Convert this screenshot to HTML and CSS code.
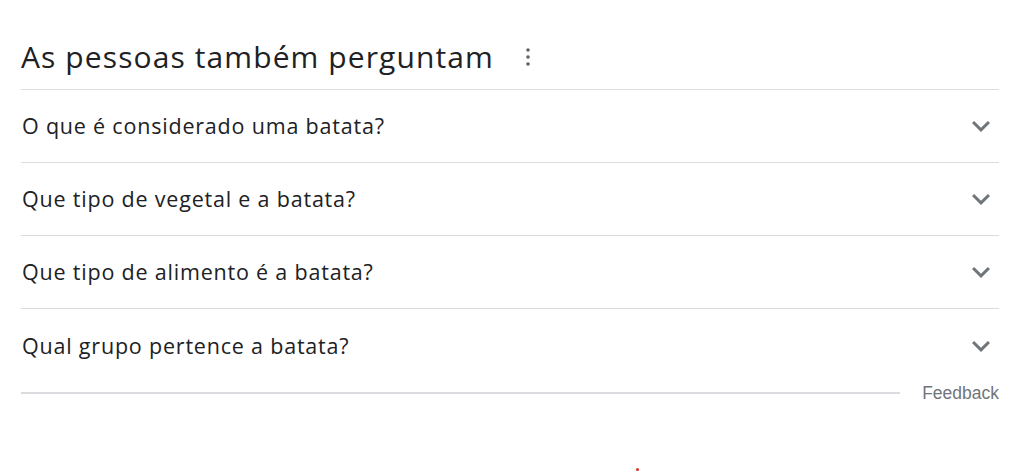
FILE: index.html
```html
<!DOCTYPE html>
<html lang="pt">
<head>
<meta charset="utf-8">
<link rel="stylesheet" href="styles.css">
</head>
<body>
<div class="paa">
  <div class="paa-head">
    <h2 class="paa-title">As pessoas também perguntam</h2>
    <span class="paa-more" aria-label="Mais opções">
      <svg width="6" height="20" viewBox="0 0 6 20"><circle cx="3" cy="3" r="1.8"/><circle cx="3" cy="10" r="1.8"/><circle cx="3" cy="17" r="1.8"/></svg>
    </span>
  </div>
  <div class="paa-list">
    <div class="paa-row"><span class="paa-q">O que é considerado uma batata?</span><svg class="chev" viewBox="0 0 24 24"><path d="M16.59 8.59L12 13.17 7.41 8.59 6 10l6 6 6-6z"/></svg></div>
    <div class="paa-row"><span class="paa-q">Que tipo de vegetal e a batata?</span><svg class="chev" viewBox="0 0 24 24"><path d="M16.59 8.59L12 13.17 7.41 8.59 6 10l6 6 6-6z"/></svg></div>
    <div class="paa-row"><span class="paa-q">Que tipo de alimento é a batata?</span><svg class="chev" viewBox="0 0 24 24"><path d="M16.59 8.59L12 13.17 7.41 8.59 6 10l6 6 6-6z"/></svg></div>
    <div class="paa-row"><span class="paa-q">Qual grupo pertence a batata?</span><svg class="chev" viewBox="0 0 24 24"><path d="M16.59 8.59L12 13.17 7.41 8.59 6 10l6 6 6-6z"/></svg></div>
  </div>
  <div class="paa-foot">
    <div class="foot-line"></div>
    <span class="feedback">Feedback</span>
  </div>
</div>
<span class="dot"></span>
</body>
</html>
```
FILE: styles.css
```css
html, body {
  margin: 0;
  padding: 0;
  background: #fff;
}
body {
  font-family: "Open Sans", Roboto, sans-serif;
  color: #202124;
  position: relative;
  width: 1032px;
  height: 473px;
  overflow: hidden;
}
.paa {
  width: 978px;
  margin-left: 21px;
  padding-top: 34px;
}
.paa-head {
  display: flex;
  align-items: center;
  height: 56px;
  border-bottom: 1px solid #dadce0;
  box-sizing: border-box;
  padding-bottom: 9px;
}
.paa-title {
  margin: 0;
  font-weight: 400;
  font-size: 30px;
  line-height: 40px;
  color: #202124;
  letter-spacing: 1.1px;
}
.paa-more {
  display: flex;
  margin-left: 31px;
  fill: #5f6368;
}
.paa-row {
  display: flex;
  align-items: center;
  justify-content: space-between;
  height: 73px;
  border-bottom: 1px solid #dadce0;
  box-sizing: border-box;
}
.paa-row:last-child {
  border-bottom: none;
}
.paa-q {
  font-size: 21.5px;
  line-height: 28px;
  color: #202124;
  padding-left: 1px;
  letter-spacing: 0.8px;
}
.chev {
  width: 36px;
  height: 36px;
  fill: #70757a;
}
.paa-foot {
  display: flex;
  align-items: center;
  margin-top: 0;
}
.foot-line {
  flex: 1;
  height: 2px;
  background: #dadce0;
}
.feedback {
  font-family: "Liberation Sans", Arial, sans-serif;
  font-size: 17.5px;
  color: #70757a;
  margin-left: 22px;
  line-height: 22px;
}
.dot {
  position: absolute;
  left: 636px;
  top: 468px;
  width: 3px;
  height: 3px;
  border-radius: 50%;
  background: #d93025;
}
```
